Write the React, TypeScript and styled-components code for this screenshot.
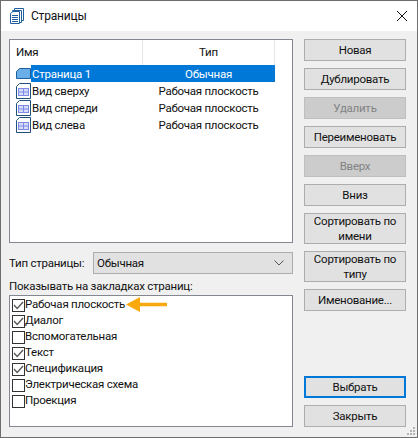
import React from 'react';
import { createGlobalStyle, styled } from 'styled-components';

const pages = [
  { name: 'Страница 1', type: 'Обычная', selected: true },
  { name: 'Вид сверху', type: 'Рабочая плоскость', selected: false },
  { name: 'Вид спереди', type: 'Рабочая плоскость', selected: false },
  { name: 'Вид слева', type: 'Рабочая плоскость', selected: false },
];

const tabs = [
  { label: 'Рабочая плоскость', checked: true, marked: true },
  { label: 'Диалог', checked: true },
  { label: 'Вспомогательная', checked: false },
  { label: 'Текст', checked: true },
  { label: 'Спецификация', checked: true },
  { label: 'Электрическая схема', checked: false },
  { label: 'Проекция', checked: false },
];

const App = () => {
  return (
    <>
      <GlobalStyle />
      <Dialog>
        <TitleBar>
          <PagesIcon />
          <Title>Страницы</Title>
          <CloseIcon />
        </TitleBar>
        <Body>
          <LeftColumn>
            <PageList>
              <ListHeader>
                <NameHeader>Имя</NameHeader>
                <TypeHeader>Тип</TypeHeader>
              </ListHeader>
              {pages.map((page) => (
                <PageRow key={page.name}>
                  {page.selected ? <FolderIcon /> : <SheetIcon />}
                  <PageCells $selected={page.selected}>
                    <PageName>{page.name}</PageName>
                    <PageType>{page.type}</PageType>
                  </PageCells>
                </PageRow>
              ))}
            </PageList>
            <TypeRow>
              <FieldLabel>Тип страницы:</FieldLabel>
              <Combo>
                Обычная
                <ChevronIcon />
              </Combo>
            </TypeRow>
            <TabsLabel>Показывать на закладках страниц:</TabsLabel>
            <TabsList>
              {tabs.map((tab) => (
                <TabRow key={tab.label}>
                  <CheckBox>{tab.checked && <CheckIcon />}</CheckBox>
                  <TabLabel>{tab.label}</TabLabel>
                  {tab.marked && <ArrowIcon />}
                </TabRow>
              ))}
            </TabsList>
          </LeftColumn>
          <ButtonColumn>
            <Button>Новая</Button>
            <Button>Дублировать</Button>
            <Button disabled>Удалить</Button>
            <Button>Переименовать</Button>
            <Button disabled>Вверх</Button>
            <Button>Вниз</Button>
            <Button $tall>Сортировать по имени</Button>
            <Button $tall>Сортировать по типу</Button>
            <Button>Именование...</Button>
            <Spacer />
            <Button $primary>Выбрать</Button>
            <Button>Закрыть</Button>
          </ButtonColumn>
        </Body>
        <Grip />
      </Dialog>
    </>
  );
};

const PagesIcon = () => (
  <TitleSvg viewBox="0 0 14 16" fill="none" stroke="#1f5f9f" strokeWidth="1">
    <path d="M4.5 2.5v-2h9v12h-2" />
    <path d="M2.5 3.5v-1h9v12h-2" />
    <path d="M3 3.5h6.5v12h-9v-10z" fill="#fff" />
    <path d="M2 7.5h6M2 9.5h6M2 11.5h6M2 13.5h6" />
  </TitleSvg>
);

const CloseIcon = () => (
  <CloseSvg viewBox="0 0 10 10" stroke="#111" strokeWidth="1" fill="none">
    <path d="M0 0l10 10M10 0L0 10" />
  </CloseSvg>
);

const FolderIcon = () => (
  <RowSvg viewBox="0 0 15 11">
    <path d="M.5 10.5v-7l3-3h11v10z" fill="#6aaee8" stroke="#1f5f9f" />
  </RowSvg>
);

const SheetIcon = () => (
  <SheetSvg viewBox="0 0 15 16" fill="none">
    <path d="M.5 15.5v-12l3-3h11v15z" fill="#fff" stroke="#1f4f7f" />
    <rect x="2.5" y="5.5" width="10" height="7" fill="#d6dcf8" stroke="#7f8ae6" />
    <path d="M2.5 9h10M7.5 5.5v7" stroke="#7f8ae6" />
  </SheetSvg>
);

const ChevronIcon = () => (
  <ComboChevron viewBox="0 0 10 6" fill="none" stroke="#555" strokeWidth="1">
    <path d="M.5.5L5 5 9.5.5" />
  </ComboChevron>
);

const CheckIcon = () => (
  <CheckSvg viewBox="0 0 11 9" fill="none" stroke="#555" strokeWidth="1.3">
    <path d="M1 4l3.2 3.5L10 1" />
  </CheckSvg>
);

const ArrowIcon = () => (
  <MarkerSvg viewBox="0 0 41 15" fill="#f9a80e">
    <path d="M0 7.5L14 0v5.8h27v3.4H14V15z" />
  </MarkerSvg>
);

const GlobalStyle = createGlobalStyle`
  html,
  body {
    margin: 0;
    background: #fff;
  }
  body {
    font-family: Roboto, "Noto Sans", sans-serif;
    font-size: 11.5px;
    letter-spacing: -0.25px;
    color: #111;
  }
`;

const Dialog = styled.div`
  position: relative;
  box-sizing: border-box;
  width: 418px;
  height: 438px;
  border: 1px solid #6e6e6e;
  background: #f0f0f0;
  display: flex;
  flex-direction: column;
`;
const TitleBar = styled.div`
  height: 30px;
  flex: none;
  background: #fff;
  display: flex;
  align-items: center;
  padding: 0 10px 0 9px;
`;
const TitleSvg = styled.svg`
  width: 14px;
  height: 16px;
  margin-right: 7px;
`;
const Title = styled.div`
  flex: 1;
  font-size: 12px;
  letter-spacing: -0.2px;
`;
const CloseSvg = styled.svg`
  width: 10px;
  height: 10px;
`;
const Body = styled.div`
  flex: 1;
  display: flex;
  padding: 8px 11px 10px 8px;
  gap: 11px;
`;
const LeftColumn = styled.div`
  width: 284px;
  display: flex;
  flex-direction: column;
`;
const PageList = styled.div`
  box-sizing: border-box;
  height: 204px;
  border: 1px solid #828790;
  background: #fff;
`;
const ListHeader = styled.div`
  display: flex;
  height: 25px;
  line-height: 24px;
`;
const NameHeader = styled.div`
  box-sizing: border-box;
  width: 133px;
  padding-left: 6px;
  border-right: 1px solid #e5e5e5;
`;
const TypeHeader = styled.div`
  box-sizing: border-box;
  width: 132px;
  text-align: center;
  border-right: 1px solid #e5e5e5;
`;
const PageRow = styled.div`
  display: flex;
  align-items: center;
  height: 17px;
  padding-left: 6px;
`;
const RowSvg = styled.svg`
  width: 15px;
  height: 11px;
  flex: none;
`;
const SheetSvg = styled.svg`
  width: 15px;
  height: 16px;
  flex: none;
`;
const PageCells = styled.div<{ $selected?: boolean }>`
  display: flex;
  width: 244px;
  height: 17px;
  line-height: 19px;
  background: ${(p) => (p.$selected ? '#0078d7' : 'transparent')};
  color: ${(p) => (p.$selected ? '#fff' : '#111')};
`;
const PageName = styled.div`
  box-sizing: border-box;
  width: 112px;
  padding-left: 1px;
`;
const PageType = styled.div`
  width: 131px;
  text-align: center;
`;
const TypeRow = styled.div`
  display: flex;
  align-items: center;
  margin-top: 9px;
  height: 22px;
`;
const FieldLabel = styled.div`
  width: 84px;
  flex: none;
`;
const Combo = styled.div`
  box-sizing: border-box;
  width: 200px;
  height: 22px;
  border: 1px solid #adadad;
  background: #e1e1e1;
  padding: 0 8px 0 3px;
  line-height: 21px;
  display: flex;
  align-items: center;
  justify-content: space-between;
`;
const ComboChevron = styled.svg`
  width: 10px;
  height: 6px;
`;
const TabsLabel = styled.div`
  height: 21px;
  line-height: 25px;
`;
const TabsList = styled.div`
  box-sizing: border-box;
  height: 132px;
  border: 1px solid #828790;
  background: #fff;
  padding-top: 1px;
`;
const TabRow = styled.div`
  display: flex;
  align-items: center;
  height: 16px;
  padding-left: 2px;
`;
const TabLabel = styled.div`
  margin-top: -2px;
`;
const CheckBox = styled.div`
  box-sizing: border-box;
  width: 13px;
  height: 13px;
  border: 1px solid #333;
  display: flex;
  align-items: center;
  justify-content: center;
`;
const CheckSvg = styled.svg`
  width: 11px;
  height: 9px;
`;
const MarkerSvg = styled.svg`
  width: 41px;
  height: 15px;
  margin: -2px 0 0 1px;
`;
const ButtonColumn = styled.div`
  width: 102px;
  display: flex;
  flex-direction: column;
  gap: 7px;
`;
const Button = styled.button<{ $tall?: boolean; $primary?: boolean }>`
  box-sizing: border-box;
  width: 100%;
  height: ${(p) => (p.$tall ? '31px' : '22px')};
  padding: 0 4px;
  font: inherit;
  letter-spacing: inherit;
  line-height: 15px;
  color: #111;
  background: #e1e1e1;
  border: ${(p) => (p.$primary ? '2px solid #0078d7' : '1px solid #adadad')};
  &:disabled {
    background: #ccc;
    border-color: #bfbfbf;
    color: #838383;
  }
`;
const Spacer = styled.div`
  flex: 1;
`;
const Grip = styled.div`
  position: absolute;
  right: 2px;
  bottom: 2px;
  width: 8px;
  height: 8px;
  background:
    linear-gradient(#b4b4b4, #b4b4b4) 6px 0 / 2px 2px no-repeat,
    linear-gradient(#b4b4b4, #b4b4b4) 3px 3px / 2px 2px no-repeat,
    linear-gradient(#b4b4b4, #b4b4b4) 6px 3px / 2px 2px no-repeat,
    linear-gradient(#b4b4b4, #b4b4b4) 0 6px / 2px 2px no-repeat,
    linear-gradient(#b4b4b4, #b4b4b4) 3px 6px / 2px 2px no-repeat,
    linear-gradient(#b4b4b4, #b4b4b4) 6px 6px / 2px 2px no-repeat;
`;

export default App;
